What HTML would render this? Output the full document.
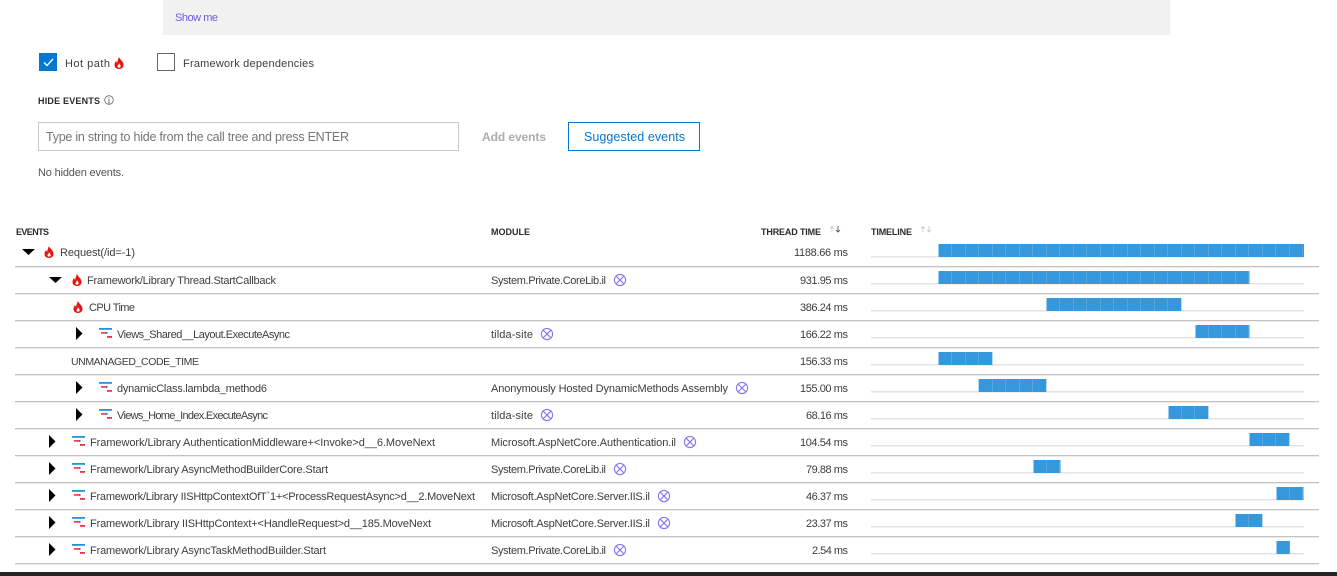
<!DOCTYPE html>
<html lang="en"><head><meta charset="utf-8"><title>Profiler trace</title>
<style>
html,body{margin:0;padding:0;background:#fff;width:1337px;height:576px;overflow:hidden}
svg{display:block}
text{font-family:"Liberation Sans",sans-serif;font-size:11px;fill:#3d3d3d}
.h{font-weight:bold;font-size:9px;fill:#2b2b2b}
.b{fill:url(#seg)}
.t{fill:#e3e3e3;height:1.5px}
.s{fill:#c2c2c2;height:1.3px}
</style></head><body>
<svg width="1337" height="576" viewBox="0 0 1337 576" xmlns="http://www.w3.org/2000/svg">
<defs>
<pattern id="seg" patternUnits="userSpaceOnUse" x="939" y="0" width="13.5" height="10"><rect width="13.5" height="10" fill="#3698dc"/><rect x="13" width="0.8" height="10" fill="#72b6e8"/></pattern>
<symbol id="fl" viewBox="0 0 10 12"><path fill="#e3170f" d="M5 0C5.5 2.5 9.5 4 9.5 8 9.5 10.5 7.5 12 5 12 2.5 12 .5 10.5 .5 8 .5 6 1.5 5 2 4 2.5 5 2.7 5.5 3.2 5.8 3.5 4 4 2 5 0Z"/><path fill="#fff" d="M5 6.2C6 7.5 7 8.5 6.6 9.8 6 11 4 11 3.5 9.8 3.2 8.8 4.6 8 5 6.2Z"/></symbol>
<symbol id="m" viewBox="0 0 13 11"><rect x="0" y="0" width="13" height="1.8" fill="#2b8fdc"/><rect x="2" y="4" width="5" height="1.8" fill="#ee4a5c"/><rect x="7" y="4" width="1.5" height="1.8" fill="#2b6fb0"/><rect x="8" y="8" width="5" height="1.8" fill="#ee3048"/></symbol>
<symbol id="x" viewBox="0 0 14 14"><circle cx="7" cy="7" r="5.6" fill="none" stroke="#8577ee" stroke-width="1.1"/><path d="M3.200 3.200L10.800 10.800M10.800 3.200L3.200 10.800" stroke="#8577ee" stroke-width="1.1"/></symbol>
</defs>

<rect x="163" y="0" width="1007" height="35" fill="#f1f1f1"/>
<text x="175" y="21" textLength="43" style="fill:#6b5ce0">Show me</text>

<rect x="39" y="53" width="18" height="18" fill="#0078d4"/>
<path d="M44 62.500L47 65.500L53 59" fill="none" stroke="#fff" stroke-width="1.4"/>
<text x="65" y="67" textLength="45">Hot path</text>
<use href="#fl" x="114" y="57" width="10" height="12"/>
<rect x="157.500" y="53.500" width="17" height="17" fill="#fff" stroke="#666"/>
<text x="183" y="67" textLength="131">Framework dependencies</text>

<text class="h" x="38" y="104" textLength="62">HIDE EVENTS</text>
<circle cx="109" cy="100" r="4.300" fill="none" stroke="#666" stroke-width=".8"/>
<path d="M109 98.800V103M108 103H110M108.300 99H109M109 96.900V97.800" stroke="#666" stroke-width=".8" fill="none"/>

<rect x="38.500" y="122.500" width="420" height="28" fill="#fff" stroke="#c8c8c8"/>
<text x="46" y="141" textLength="303" style="font-size:12.500px;fill:#757575">Type in string to hide from the call tree and press ENTER</text>
<text x="482" y="141" textLength="64" style="font-size:12px;font-weight:bold;fill:#acacac">Add events</text>
<rect x="568.500" y="122.500" width="131" height="28" fill="#fff" stroke="#0078d4"/>
<text x="584" y="141" textLength="101" style="font-size:12.500px;fill:#0078d4">Suggested events</text>
<text x="38" y="176" textLength="86" style="font-size:11px;fill:#555">No hidden events.</text>

<text class="h" x="16" y="235" textLength="33">EVENTS</text>
<text class="h" x="491" y="235" textLength="39">MODULE</text>
<text class="h" x="761" y="235" textLength="60">THREAD TIME</text>
<path d="M832 232V226.500M830 228.500L832 226.500L834 228.500" fill="none" stroke="#c4c4c4" stroke-width=".8"/>
<path d="M838 226V232M836 230L838 232L840 230" fill="none" stroke="#444" stroke-width=".8"/>
<text class="h" x="871" y="235" textLength="41">TIMELINE</text>
<path d="M923 232V226.500M921 228.500L923 226.500L925 228.500M929 226V232M927 230L929 232L931 230" fill="none" stroke="#c4c4c4" stroke-width=".8"/>

<!-- separators -->
<rect class="s" x="15" y="266" width="1304" height="1"/>
<rect class="s" x="15" y="293" width="1304" height="1"/>
<rect class="s" x="15" y="320" width="1304" height="1"/>
<rect class="s" x="15" y="347" width="1304" height="1"/>
<rect class="s" x="15" y="374" width="1304" height="1"/>
<rect class="s" x="15" y="401" width="1304" height="1"/>
<rect class="s" x="15" y="428" width="1304" height="1"/>
<rect class="s" x="15" y="455" width="1304" height="1"/>
<rect class="s" x="15" y="482" width="1304" height="1"/>
<rect class="s" x="15" y="509" width="1304" height="1"/>
<rect class="s" x="15" y="536" width="1304" height="1"/>
<rect class="s" x="15" y="563" width="1304" height="1"/>

<!-- timeline baselines -->
<rect class="t" x="871" y="256" width="433" height="1"/>
<rect class="t" x="871" y="283" width="433" height="1"/>
<rect class="t" x="871" y="310" width="433" height="1"/>
<rect class="t" x="871" y="337" width="433" height="1"/>
<rect class="t" x="871" y="364" width="433" height="1"/>
<rect class="t" x="871" y="391" width="433" height="1"/>
<rect class="t" x="871" y="418" width="433" height="1"/>
<rect class="t" x="871" y="445" width="433" height="1"/>
<rect class="t" x="871" y="472" width="433" height="1"/>
<rect class="t" x="871" y="499" width="433" height="1"/>
<rect class="t" x="871" y="526" width="433" height="1"/>
<rect class="t" x="871" y="553" width="433" height="1"/>

<!-- bars -->
<g transform="translate(-.5 0)">
<rect class="b" x="939" y="244" width="365.500" height="13"/>
<rect class="b" x="939" y="271" width="311" height="13"/>
<rect class="b" x="1047" y="298" width="135" height="13"/>
<rect class="b" x="1196" y="325" width="54" height="13"/>
<rect class="b" x="939" y="352" width="54" height="13"/>
<rect class="b" x="979" y="379" width="68" height="13"/>
<rect class="b" x="1169" y="406" width="40" height="13"/>
<rect class="b" x="1250" y="433" width="40" height="13"/>
<rect class="b" x="1034" y="460" width="27" height="13"/>
<rect class="b" x="1277" y="487" width="27" height="13"/>
<rect class="b" x="1236" y="514" width="27" height="13"/>
<rect class="b" x="1277" y="541" width="13.500" height="13"/>
</g>

<!-- row 0 -->
<path d="M22 249H35L28.500 255Z" fill="#000"/>
<use href="#fl" x="44" y="246" width="10" height="12"/>
<text x="60" y="256" textLength="75">Request(/id=-1)</text>
<text x="794" y="256" textLength="54">1188.66 ms</text>
<!-- row 1 -->
<path d="M49 277H62L55.500 283Z" fill="#000"/>
<use href="#fl" x="72" y="274" width="10" height="12"/>
<text x="87" y="284" textLength="189">Framework/Library Thread.StartCallback</text>
<text x="491" y="284" textLength="115">System.Private.CoreLib.il</text>
<use href="#x" x="613" y="273" width="14" height="14"/>
<text x="800" y="284" textLength="48">931.95 ms</text>
<!-- row 2 -->
<use href="#fl" x="73" y="301" width="10" height="12"/>
<text x="89" y="311" textLength="46">CPU Time</text>
<text x="800" y="311" textLength="48">386.24 ms</text>
<!-- row 3 -->
<path d="M76 327L82.500 333.500L76 340Z" fill="#000"/>
<use href="#m" x="99" y="328" width="13" height="11"/>
<text x="117" y="338" textLength="173">Views_Shared__Layout.ExecuteAsync</text>
<text x="491" y="338" textLength="42">tilda-site</text>
<use href="#x" x="540" y="327" width="14" height="14"/>
<text x="800" y="338" textLength="48">166.22 ms</text>
<!-- row 4 -->
<text x="71" y="365" textLength="128" style="font-size:10.500px">UNMANAGED_CODE_TIME</text>
<text x="800" y="365" textLength="48">156.33 ms</text>
<!-- row 5 -->
<path d="M76 381L82.500 387.500L76 394Z" fill="#000"/>
<use href="#m" x="99" y="382" width="13" height="11"/>
<text x="117" y="392" textLength="150">dynamicClass.lambda_method6</text>
<text x="491" y="392" textLength="237">Anonymously Hosted DynamicMethods Assembly</text>
<use href="#x" x="735" y="381" width="14" height="14"/>
<text x="800" y="392" textLength="48">155.00 ms</text>
<!-- row 6 -->
<path d="M76 408L82.500 414.500L76 421Z" fill="#000"/>
<use href="#m" x="99" y="409" width="13" height="11"/>
<text x="117" y="419" textLength="151">Views_Home_Index.ExecuteAsync</text>
<text x="491" y="419" textLength="42">tilda-site</text>
<use href="#x" x="540" y="408" width="14" height="14"/>
<text x="806" y="419" textLength="42">68.16 ms</text>
<!-- row 7 -->
<path d="M49 435L55.500 441.500L49 448Z" fill="#000"/>
<use href="#m" x="72" y="436" width="13" height="11"/>
<text x="90" y="446" textLength="345">Framework/Library AuthenticationMiddleware+&lt;Invoke&gt;d__6.MoveNext</text>
<text x="491" y="446" textLength="185">Microsoft.AspNetCore.Authentication.il</text>
<use href="#x" x="683" y="435" width="14" height="14"/>
<text x="800" y="446" textLength="48">104.54 ms</text>
<!-- row 8 -->
<path d="M49 462L55.500 468.500L49 475Z" fill="#000"/>
<use href="#m" x="72" y="463" width="13" height="11"/>
<text x="90" y="473" textLength="238">Framework/Library AsyncMethodBuilderCore.Start</text>
<text x="491" y="473" textLength="115">System.Private.CoreLib.il</text>
<use href="#x" x="613" y="462" width="14" height="14"/>
<text x="806" y="473" textLength="42">79.88 ms</text>
<!-- row 9 -->
<path d="M49 489L55.500 495.500L49 502Z" fill="#000"/>
<use href="#m" x="72" y="490" width="13" height="11"/>
<text x="90" y="500" textLength="385">Framework/Library IISHttpContextOfT`1+&lt;ProcessRequestAsync&gt;d__2.MoveNext</text>
<text x="491" y="500" textLength="159">Microsoft.AspNetCore.Server.IIS.il</text>
<use href="#x" x="657" y="489" width="14" height="14"/>
<text x="806" y="500" textLength="42">46.37 ms</text>
<!-- row 10 -->
<path d="M49 516L55.500 522.500L49 529Z" fill="#000"/>
<use href="#m" x="72" y="517" width="13" height="11"/>
<text x="90" y="527" textLength="341">Framework/Library IISHttpContext+&lt;HandleRequest&gt;d__185.MoveNext</text>
<text x="491" y="527" textLength="159">Microsoft.AspNetCore.Server.IIS.il</text>
<use href="#x" x="657" y="516" width="14" height="14"/>
<text x="806" y="527" textLength="42">23.37 ms</text>
<!-- row 11 -->
<path d="M49 543L55.500 549.500L49 556Z" fill="#000"/>
<use href="#m" x="72" y="544" width="13" height="11"/>
<text x="90" y="554" textLength="236">Framework/Library AsyncTaskMethodBuilder.Start</text>
<text x="491" y="554" textLength="115">System.Private.CoreLib.il</text>
<use href="#x" x="613" y="543" width="14" height="14"/>
<text x="812" y="554" textLength="36">2.54 ms</text>

<rect x="0" y="572" width="1337" height="4" fill="#252423"/>
</svg>
</body></html>
